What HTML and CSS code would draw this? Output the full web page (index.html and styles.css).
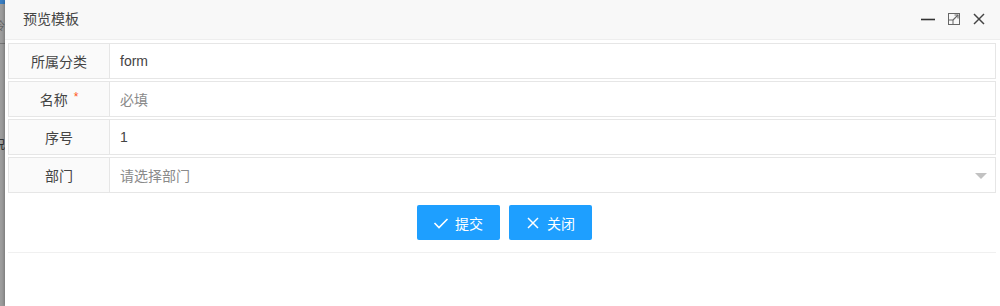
FILE: index.html
```html
<!DOCTYPE html>
<html lang="zh-CN">
<head>
<meta charset="utf-8">
<title>预览模板</title>
<link rel="stylesheet" href="styles.css">
</head>
<body>
<div class="page">
  <div class="backdrop">
    <div class="bd-top"></div>
    <div class="bd-frag bd-frag1">冷</div>
    <div class="bd-line"></div>
    <div class="bd-frag bd-frag2">况<br>s<br>y<br>u</div>
  </div>
  <div class="layer">
    <div class="layer-title">
      <span class="title-text">预览模板</span>
      <div class="title-tools">
        <svg class="tool" width="16" height="16" viewBox="0 0 16 16"><line x1="1" y1="8.5" x2="15" y2="8.5" stroke="#333" stroke-width="1.6"/></svg>
        <svg class="tool" width="14" height="14" viewBox="0 0 14 14"><rect x="1.5" y="1.5" width="11" height="11" fill="none" stroke="#666" stroke-width="1"/><rect x="1.5" y="8" width="4.5" height="4.5" fill="none" stroke="#666" stroke-width="1"/><line x1="6" y1="8" x2="11" y2="3" stroke="#666" stroke-width="1.1"/><polyline points="7.5,3 11,3 11,6.5" fill="none" stroke="#666" stroke-width="1.1"/></svg>
        <svg class="tool" width="14" height="14" viewBox="0 0 14 14"><line x1="2" y1="2" x2="12" y2="12" stroke="#444" stroke-width="1.5"/><line x1="12" y1="2" x2="2" y2="12" stroke="#444" stroke-width="1.5"/></svg>
      </div>
    </div>
    <div class="layer-content">
      <form class="form">
        <div class="row">
          <label class="label">所属分类</label>
          <div class="field"><span class="value">form</span></div>
        </div>
        <div class="row">
          <label class="label">名称<span class="req">*</span></label>
          <div class="field"><span class="placeholder">必填</span></div>
        </div>
        <div class="row">
          <label class="label">序号</label>
          <div class="field"><span class="value">1</span></div>
        </div>
        <div class="row">
          <label class="label">部门</label>
          <div class="field select"><span class="placeholder">请选择部门</span><i class="caret"></i></div>
        </div>
        <div class="actions">
          <button type="button" class="btn"><svg width="16" height="16" viewBox="0 0 16 16"><polyline points="1.5,8 6,12.5 14.5,4" fill="none" stroke="#fff" stroke-width="1.6"/></svg>提交</button>
          <button type="button" class="btn"><svg width="16" height="16" viewBox="0 0 16 16"><line x1="3" y1="3" x2="13" y2="13" stroke="#fff" stroke-width="1.5"/><line x1="13" y1="3" x2="3" y2="13" stroke="#fff" stroke-width="1.5"/></svg>关闭</button>
        </div>
      </form>
      <div class="footer-line"></div>
    </div>
  </div>
</div>
</body>
</html>
```

FILE: styles.css
```css
* { box-sizing: border-box; }
html, body { margin: 0; padding: 0; }
body {
  width: 1000px;
  height: 306px;
  overflow: hidden;
  background: #fff;
  font-family: "Liberation Sans", "Noto Sans CJK SC", sans-serif;
  font-size: 14px;
  color: #333;
}
.page {
  display: flex;
  height: 306px;
}
.backdrop {
  width: 5px;
  flex: none;
  background: #9d9d9d;
  display: flex;
  flex-direction: column;
  overflow: hidden;
}
.bd-top {
  height: 4px;
  background: #3a7fc4;
}
.bd-frag {
  font-size: 11px;
  color: #444;
  line-height: 13px;
  margin-left: -6px;
  width: 20px;
}
.bd-frag1 { margin-top: 16px; color: #666; }
.bd-line {
  height: 1px;
  background: #777;
  margin-top: 10px;
}
.bd-frag2 { margin-top: 95px; color: #222; }
.layer {
  flex: 1;
  display: flex;
  flex-direction: column;
  background: #fff;
  box-shadow: -1px 0 3px rgba(0,0,0,.25);
}
.layer-title {
  height: 40px;
  flex: none;
  background: #f8f8f8;
  border-bottom: 1px solid #eee;
  display: flex;
  align-items: center;
  justify-content: space-between;
  padding: 0 14px 0 18px;
}
.title-text {
  font-size: 14px;
  color: #444;
  margin-top: -3px;
}
.title-tools {
  display: flex;
  align-items: center;
  gap: 11px;
  margin-top: -2px;
}
.tool { display: block; }
.layer-content {
  flex: 1;
  padding: 3px 4px 0 3px;
}
.form {
  display: flex;
  flex-direction: column;
  gap: 2px;
}
.row {
  display: flex;
  height: 36px;
  border: 1px solid #e6e6e6;
}
.label {
  width: 101px;
  flex: none;
  background: #fafafa;
  border-right: 1px solid #e6e6e6;
  display: flex;
  align-items: center;
  justify-content: center;
  color: #444;
}
.req {
  color: #ff5722;
  margin-left: 6px;
  font-size: 12px;
  position: relative;
  top: -2px;
}
.field {
  flex: 1;
  display: flex;
  align-items: center;
  padding-left: 10px;
  padding-right: 10px;
  background: #fff;
}
.value { color: #444; }
.placeholder { color: #8a8a8a; }
.select { justify-content: space-between; }
.caret {
  width: 0;
  height: 0;
  border-left: 6px solid transparent;
  border-right: 6px solid transparent;
  border-top: 6px solid #c2c2c2;
  margin-right: -2px;
  margin-top: 2px;
}
.actions {
  display: flex;
  justify-content: center;
  gap: 9px;
  margin-top: 10px;
  padding-left: 4px;
}
.btn {
  width: 83px;
  height: 35px;
  border: none;
  border-radius: 2px;
  background: #1e9fff;
  color: #fff;
  font-family: "Liberation Sans", "Noto Sans CJK SC", sans-serif;
  font-size: 14px;
  display: flex;
  align-items: center;
  justify-content: center;
  gap: 6px;
  padding: 0;
}
.btn svg { display: block; }
.footer-line {
  height: 1px;
  background: #f0f0f0;
  margin-top: 12px;
}
```
